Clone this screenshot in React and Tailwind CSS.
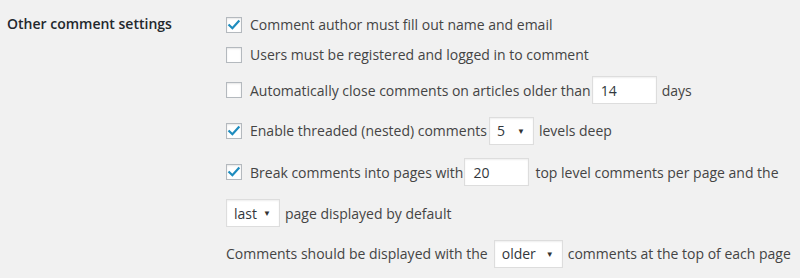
import React from 'react';

const Check = ({ checked }) => (
    <span className="relative inline-flex w-4 h-4 shrink-0 border border-[#b4b9be] bg-white shadow-[inset_0_1px_2px_rgba(0,0,0,0.1)] mr-2">
        {checked && (
            <svg viewBox="0 0 16 16" className="absolute -left-[1px] -top-[1px] w-4 h-4">
                <path d="M3.3 8.2 L6.4 11.2 L12.6 4.4" fill="none" stroke="#1e8cbe" strokeWidth="2.2" strokeLinecap="square" />
            </svg>
        )}
    </span>
);

const TextBox = ({ value }) => (
    <span className="inline-flex items-center w-[65px] h-[28px] border border-[#ddd] bg-white shadow-[inset_0_1px_2px_rgba(0,0,0,0.07)] pl-[8px] text-[#32373c]">
        {value}
    </span>
);

const Select = ({ value, width }) => (
    <span className={`inline-flex items-center justify-between h-[28px] border border-[#ddd] bg-white shadow-[inset_0_1px_2px_rgba(0,0,0,0.07)] pl-[7px] pr-[8px] text-[#32373c] ${width}`}>
        <span>{value}</span>
        <span className="text-[8px] text-[#333]">▼</span>
    </span>
);

const App = () => {
    return (
        <div className="w-[800px] h-[278px] bg-[#f1f1f1] text-[14px] text-[#444] flex" style={{ fontFamily: '"Open Sans", sans-serif' }}>
            <div className="w-[226px] shrink-0 pl-[7px] pt-[13px] font-semibold text-[#23282d]">
                Other comment settings
            </div>
            <div className="flex flex-col pt-[9px]">
                <div className="flex items-center h-[31px]">
                    <Check checked />
                    <span>Comment author must fill out name and email</span>
                </div>
                <div className="flex items-center h-[29px]">
                    <Check />
                    <span>Users must be registered and logged in to comment</span>
                </div>
                <div className="flex items-center h-[42px]">
                    <Check />
                    <span>Automatically close comments on articles older than</span>
                    <span className="ml-[1px]"><TextBox value="14" /></span>
                    <span className="ml-[5px]">days</span>
                </div>
                <div className="flex items-center h-[39px]">
                    <Check checked />
                    <span>Enable threaded (nested) comments</span>
                    <span className="ml-[2px]"><Select value="5" width="w-[45px]" /></span>
                    <span className="ml-[5px]">levels deep</span>
                </div>
                <div className="flex items-center h-[44px]">
                    <Check checked />
                    <span>Break comments into pages with</span>
                    <span className="ml-[1px]"><TextBox value="20" /></span>
                    <span className="ml-[6px]">top level comments per page and the</span>
                </div>
                <div className="flex items-center h-[38px]">
                    <Select value="last" width="w-[54px]" />
                    <span className="ml-[5px]">page displayed by default</span>
                </div>
                <div className="flex items-center h-[43px]">
                    <span>Comments should be displayed with the</span>
                    <span className="ml-[6px]"><Select value="older" width="w-[69px]" /></span>
                    <span className="ml-[5px]">comments at the top of each page</span>
                </div>
            </div>
        </div>
    );
};

export default App;
